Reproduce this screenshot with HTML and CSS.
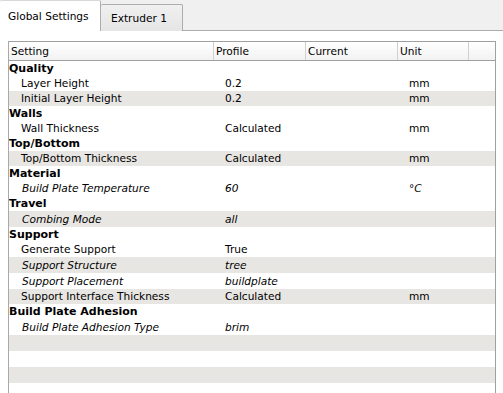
FILE: index.html
```html
<!DOCTYPE html>
<html>
<head>
<meta charset="utf-8">
<link rel="stylesheet" href="styles.css">
</head>
<body>
<div class="tabbar">
  <div class="tab active">Global Settings</div>
  <div class="tab">Extruder 1</div>
</div>
<div class="pane">
  <div class="table">
    <div class="row head">
      <div class="c">Setting</div><div class="c">Profile</div><div class="c">Current</div><div class="c">Unit</div><div class="c"></div>
    </div>
    <div class="row cat"><div class="c">Quality</div></div>
    <div class="row"><div class="c">Layer Height</div><div class="c">0.2</div><div class="c"></div><div class="c">mm</div></div>
    <div class="row alt"><div class="c">Initial Layer Height</div><div class="c">0.2</div><div class="c"></div><div class="c">mm</div></div>
    <div class="row cat"><div class="c">Walls</div></div>
    <div class="row"><div class="c">Wall Thickness</div><div class="c">Calculated</div><div class="c"></div><div class="c">mm</div></div>
    <div class="row cat"><div class="c">Top/Bottom</div></div>
    <div class="row alt"><div class="c">Top/Bottom Thickness</div><div class="c">Calculated</div><div class="c"></div><div class="c">mm</div></div>
    <div class="row cat"><div class="c">Material</div></div>
    <div class="row it"><div class="c">Build Plate Temperature</div><div class="c">60</div><div class="c"></div><div class="c">°C</div></div>
    <div class="row cat"><div class="c">Travel</div></div>
    <div class="row alt it tall"><div class="c">Combing Mode</div><div class="c">all</div><div class="c"></div><div class="c"></div></div>
    <div class="row cat"><div class="c">Support</div></div>
    <div class="row"><div class="c">Generate Support</div><div class="c">True</div><div class="c"></div><div class="c"></div></div>
    <div class="row alt it tall"><div class="c">Support Structure</div><div class="c">tree</div><div class="c"></div><div class="c"></div></div>
    <div class="row it tall"><div class="c">Support Placement</div><div class="c">buildplate</div><div class="c"></div><div class="c"></div></div>
    <div class="row alt"><div class="c">Support Interface Thickness</div><div class="c">Calculated</div><div class="c"></div><div class="c">mm</div></div>
    <div class="row cat"><div class="c">Build Plate Adhesion</div></div>
    <div class="row it tall"><div class="c">Build Plate Adhesion Type</div><div class="c">brim</div><div class="c"></div><div class="c"></div></div>
    <div class="row alt empty"></div>
    <div class="row empty"></div>
    <div class="row alt empty"></div>
    <div class="row empty"></div>
  </div>
</div>
</body>
</html>
```
FILE: styles.css
```css
html, body {
  margin: 0;
  padding: 0;
  background: #ffffff;
  overflow: hidden;
  height: 393px;
}
body {
  font-family: "DejaVu Sans", sans-serif;
  font-size: 10.6px;
  color: #000;
}
.tabbar {
  display: flex;
  align-items: flex-end;
  height: 30px;
  background: #f0f0f0;
  border-bottom: 1px solid #adadad;
}
.tab {
  box-sizing: border-box;
  height: 27px;
  margin-bottom: -1px;
  border: 1px solid #adadad;
  border-bottom: none;
  border-left: none;
  background: linear-gradient(#f0f0f0, #e5e5e5);
  padding: 0 10px;
  display: flex;
  align-items: center;
  width: 82px;
  border-radius: 2px 2px 0 0;
}
.tab.active {
  background: #fff;
  width: 101px;
  padding: 0 0 1px 8px;
  border-right: 1px solid #adadad;
  border-top: 1px solid #d8d8d8;
  position: relative;
  z-index: 1;
  height: 31px;
}
.pane {
  padding: 10px 7px 0 8px;
}
.table {
  border-left: 1px solid #a9a9a9;
  border-right: 1px solid #a0a0a0;
  height: 352px;
  overflow: hidden;
}
.row {
  display: grid;
  grid-template-columns: 204px 92px 92px 71px 1fr;
  height: 15px;
  line-height: 15px;
  white-space: nowrap;
}
.row.tall, .row.empty { height: 16px; line-height: 16px; }
.row.alt { background: #e8e6e3; }
.row .c { padding-left: 12px; overflow: hidden; }
.row.it .c { font-style: italic; }
.row.it .c:first-child { padding-left: 13px; }
.row.cat .c { padding-left: 0; font-weight: bold; font-size: 11px; }
.row.head {
  height: 20px;
  line-height: 18px;
  border-top: 1px solid #a0a0a0;
  border-bottom: 1px solid #a0a0a0;
  background: linear-gradient(#ffffff, #f2f2f2);
  box-sizing: border-box;
  grid-template-columns: 205px 92px 92px 71px 1fr;
}
.row.head .c {
  padding-left: 2px;
  border-right: 1px solid #d0d0d0;
}
.row.head .c:last-child { border-right: none; }
```
